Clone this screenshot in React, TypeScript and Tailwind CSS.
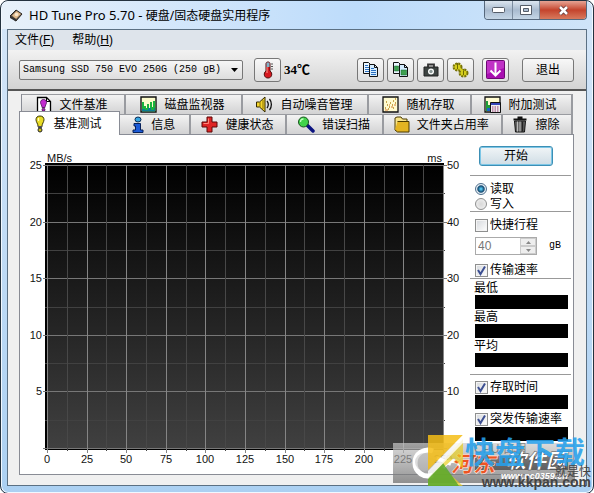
import React, {useState} from 'react'

const SANS = 'font-["Liberation_Sans","Noto_Sans_CJK_SC",sans-serif]'

const TOP_TABS = [
    {id: 'file', title: '文件基准', icon: <FileIcon />},
    {id: 'disk', title: '磁盘监视器', icon: <MonitorIcon />},
    {id: 'aam', title: '自动噪音管理', icon: <SpeakerIcon />},
    {id: 'random', title: '随机存取', icon: <RandomIcon />},
    {id: 'extra', title: '附加测试', icon: <ExtraIcon />}
]

const BOTTOM_TABS = [
    {id: 'bench', title: '基准测试', icon: <BulbIcon />},
    {id: 'info', title: '信息', icon: <InfoIcon />},
    {id: 'health', title: '健康状态', icon: <CrossIcon />},
    {id: 'scan', title: '错误扫描', icon: <ScanIcon />},
    {id: 'folder', title: '文件夹占用率', icon: <FolderIcon />},
    {id: 'erase', title: '擦除', icon: <TrashIcon />}
]

function FileIcon() {
    return (
        <svg width="16" height="18" viewBox="0 0 16 18">
            <path d="M1.500 1.500h9l4 4v11h-13z" fill="#fff" stroke="#000" strokeWidth="1.300" />
            <path d="M10.500 1.500v4h4" fill="none" stroke="#000" />
            <path d="M7.500 3.500c2 0 3 1.300 3 3 0 1.500-1.500 3-1.500 5H6c0-2-1.500-3.500-1.500-5 0-1.700 1-3 3-3z" fill="#c32bd0" stroke="#4a0a55" strokeWidth=".8" />
            <circle cx="7.500" cy="13.700" r="1.500" fill="#a81cb5" stroke="#300038" strokeWidth=".7" />
        </svg>
    )
}

function MonitorIcon() {
    return (
        <svg width="17" height="17" viewBox="0 0 17 17">
            <path d="M1 1h15v15H1z" fill="#fdfccc" stroke="#111" strokeWidth="1.400" />
            <path d="M2 15.300V6h2v4h2v2h1V8h2v4h1V6h2v5h1V5h2.300v10.300z" fill="#19b33c" />
            <path d="M2 15.300V13h3v1h3v-2h3v2h3v-2h1v3.300z" fill="#0b7c94" />
        </svg>
    )
}

function SpeakerIcon() {
    return (
        <svg width="18" height="17" viewBox="0 0 18 17">
            <path d="M1.500 6h3L10 1v15l-5.500-5h-3z" fill="#f4d42c" stroke="#332900" />
            <path d="M5 6v5M8 4v9" stroke="#8a7206" />
            <path d="M12 5c1.500 2 1.500 5 0 7M14.500 3c2.500 3 2.500 8 0 11" fill="none" stroke="#111" strokeWidth="1.300" />
        </svg>
    )
}

function RandomIcon() {
    return (
        <svg width="17" height="17" viewBox="0 0 17 17">
            <path d="M1 1h15v15H1z" fill="#fffbd0" stroke="#111" strokeWidth="1.300" />
            <path d="M3 12h1M5 9h1M7 11h1M8 7h1M10 9h1M11 5h1M13 7h1M13 3h1M4 6h1M6 13h1M11 12h1" stroke="#b78a20" strokeWidth="1.300" />
            <path d="M3 14h3M9 11h2M12 9h2M7 9h1" stroke="#d77b35" />
        </svg>
    )
}

function ExtraIcon() {
    return (
        <svg width="17" height="17" viewBox="0 0 17 17">
            <path d="M1 1h15v15H1z" fill="#fffbd0" stroke="#111" strokeWidth="1.300" />
            <path d="M2 15V5h2v4h2v6z" fill="#1f9e3a" />
            <path d="M3 15v-3h3v3z" fill="#1b63c8" />
            <path d="M6.500 6.500h10v10h-10z" fill="#eee" stroke="#111" />
            <path d="M7 7h9v2H7z" fill="#3545b8" />
            <path d="M8 11h7M8 13h7M8 15h7" stroke="#96346e" strokeDasharray="1.500 1" />
        </svg>
    )
}

function BulbIcon() {
    return (
        <svg width="12" height="18" viewBox="0 0 12 18">
            <path d="M6 1c2.700 0 4 1.500 4 3.800C10 7 8 8.500 7.800 12H4.200C4 8.500 2 7 2 4.800 2 2.500 3.300 1 6 1z" fill="#e9dc26" stroke="#3a3500" />
            <path d="M4.500 3v3" stroke="#fffcc0" strokeWidth="1.300" />
            <path d="M4 11h4v2H4z" fill="#555" />
            <circle cx="6" cy="15" r="2" fill="#cfc01c" stroke="#222" />
        </svg>
    )
}

function InfoIcon() {
    return (
        <svg width="12" height="18" viewBox="0 0 12 18">
            <ellipse cx="6" cy="3.500" rx="3" ry="2.500" fill="#37a7e2" stroke="#0a2c55" />
            <path d="M2 7.500h6.500V14H11v2.500H1V14h2.500v-4H2z" fill="#1c5bd8" stroke="#07215a" />
        </svg>
    )
}

function CrossIcon() {
    return (
        <svg width="17" height="17" viewBox="0 0 17 17">
            <path d="M6 1h5v5h5v5h-5v5H6v-5H1V6h5z" fill="#df2424" stroke="#5a0808" />
            <path d="M7.500 2.500v5h-5" fill="none" stroke="#ff8878" />
        </svg>
    )
}

function ScanIcon() {
    return (
        <svg width="18" height="17" viewBox="0 0 18 17">
            <path d="M10 9l6 6" stroke="#0b1380" strokeWidth="3.500" strokeLinecap="round" />
            <circle cx="6.500" cy="6" r="5" fill="#41d34b" stroke="#18541d" />
            <path d="M3.500 6c0-2 1-3 3-3" fill="none" stroke="#c2ffc0" strokeWidth="1.300" />
        </svg>
    )
}

function FolderIcon() {
    return (
        <svg width="16" height="17" viewBox="0 0 16 17">
            <path d="M1 14V2l2-1h4l1.500 2H13v11z" fill="#f7e48a" stroke="#4b3a00" />
            <path d="M3.500 5.500h11.500v10.500H3.500L1 14" fill="#e3b422" stroke="#4b3a00" />
        </svg>
    )
}

function TrashIcon() {
    return (
        <svg width="16" height="17" viewBox="0 0 16 17">
            <path d="M5.500 1.500h5M1.500 3.500h13" stroke="#111" strokeWidth="1.800" />
            <path d="M2.500 5h11l-1 11h-9z" fill="#666" stroke="#111" />
            <path d="M5.500 5.500v10M8 5.500v10" stroke="#bbb" />
            <path d="M10.500 5.500v10" stroke="#222" strokeWidth="1.500" />
        </svg>
    )
}

function DriveIcon() {
    return (
        <svg width="14" height="13" viewBox="0 0 14 13">
            <path d="M1 7l6-6 6 4-6 7z" fill="#5d5348" stroke="#2a2622" />
            <path d="M3 6.500L7.500 2 12 5 7 10z" fill="#e0b98a" />
            <circle cx="7.500" cy="5.500" r="1.800" fill="#f8e6cc" />
            <path d="M1 7v2l6 3.500V10z" fill="#333" />
        </svg>
    )
}

function ThermometerIcon() {
    return (
        <svg width="12" height="18" viewBox="0 0 12 18">
            <path d="M4 2.500C4 .5 8 .5 8 2.500V10c3 2 2 7-2 7s-5-5-2-7z" fill="#d71920" stroke="#4c0c0c" />
            <path d="M4.500 1.500h3V6h-3z" fill="#7fb3c9" />
            <path d="M5 6v6" stroke="#ff9c90" />
            <path d="M9 3h2M9 5.500h2M9 8h2" stroke="#555" />
        </svg>
    )
}

function CopyIcon({green}: { green?: boolean }) {
    return (
        <svg width="17" height="17" viewBox="0 0 17 17">
            <path d="M1.500 1.500h5l2 2v9h-7z" fill="#eaf6ff" stroke="#111" />
            <path d="M7.500 3.500h5l3 3v9h-8z" fill="#d5edff" stroke="#111" />
            <path d="M12.500 3.500v3h3" fill="none" stroke="#111" />
            { green
                ? <path d="M2.500 5h4v5h-4zM9 9h5.500v5H9z" fill="#3ea04f" stroke="#176b28" strokeWidth=".5" />
                : <path d="M3 4.500h3M3 6.500h4M3 8.500h4M3 10.500h4M9 7.500h3M9 9.500h5M9 11.500h5M9 13.500h5" stroke="#2a6fc0" /> }
        </svg>
    )
}

function CameraIcon() {
    return (
        <svg width="16" height="14" viewBox="0 0 16 14">
            <path d="M5 4V1.500h6V4" fill="none" stroke="#333" strokeWidth="1.800" />
            <path d="M1 4h14v9H1z" fill="#3d4442" stroke="#222" />
            <circle cx="8" cy="8.500" r="3" fill="#fff" />
            <circle cx="8" cy="8.500" r="1.700" fill="#8c9a98" />
        </svg>
    )
}

function OptionsIcon() {
    return (
        <svg width="17" height="16" viewBox="0 0 17 16">
            <ellipse cx="5.500" cy="5" rx="4" ry="3.500" fill="#d6cf1c" stroke="#77720a" strokeWidth="2" strokeDasharray="2 1" />
            <ellipse cx="11.500" cy="11" rx="4" ry="3.500" fill="#d6cf1c" stroke="#77720a" strokeWidth="2" strokeDasharray="2 1" />
            <path d="M5.500 1v6M11.500 7v6" stroke="#6f6a00" />
            <path d="M7 6l4 3" stroke="#d6cf1c" strokeWidth="2" />
        </svg>
    )
}

function SaveIcon() {
    return (
        <svg width="19" height="19" viewBox="0 0 19 19">
            <rect x=".5" y=".5" width="18" height="18" rx="1" fill="#a80fb0" stroke="#6c0873" />
            <path d="M1 1h17v7L1 14z" fill="#d04ad6" opacity=".6" />
            <path d="M9.500 2.500v13M4.500 10.500l5 5 5-5" fill="none" stroke="#fff" strokeWidth="2" />
        </svg>
    )
}

function ToolButton({label, children}: { label: string, children: React.ReactNode }) {
    return (
        <button
            aria-label={label}
            className="flex h-6 w-[27px] shrink-0 items-center justify-center rounded-[3px] border border-[#777] bg-linear-to-b from-[#f8f8f8] to-[#dedede]"
        >
            {children}
        </button>
    )
}

function Tab({title, icon, active, onClick}: { title: string, icon: React.ReactNode, active: boolean, onClick: () => void }) {
    return (
        <button
            role="tab"
            aria-selected={active}
            onClick={onClick}
            className={active
                ? 'relative z-10 -mt-[3px] -mb-px flex items-center justify-center gap-2 border border-b-0 border-[#898c95] bg-white pt-px pr-1 whitespace-nowrap'
                : 'flex h-5 items-center justify-center gap-[7px] border-t border-r-2 border-[#999ba0] bg-linear-to-b from-[#f3f3f3] to-[#d2d2d3] pr-[2px] whitespace-nowrap'}
        >
            {icon}
            <span>{title}</span>
        </button>
    )
}

function Chart() {
    const columns = Array.from({length: 21}, (_, i) => i)
    const rows = Array.from({length: 11}, (_, i) => i)
    const x = (i: number) => 27 + Math.round(i * 19.8)
    const y = (i: number) => 30 + Math.round(i * 28.3)

    return (
        <svg viewBox="0 0 450 339" className="block w-full" fontSize="11" fill="#111" shapeRendering="crispEdges">
            <defs>
                <linearGradient id="plot" x1="0" y1="0" x2="0" y2="1">
                    <stop offset="0" stopColor="#000" />
                    <stop offset="1" stopColor="#404040" />
                </linearGradient>
            </defs>
            <rect x="25" y="28" width="399" height="287" fill="#000" />
            <rect x="27" y="30" width="396" height="283" fill="url(#plot)" />
            { rows.map(i => (
                <rect key={i} x={i % 2 ? 25 : 23} y={y(i)} width={i % 2 ? 400 : 404} height="1" fill={i % 2 ? '#414141' : '#777'} />
            )) }
            { columns.map(i => (
                <rect key={i} x={x(i)} y="30" width="1" height={i % 2 ? 286 : 288} fill={i % 2 ? '#484848' : '#858585'} />
            )) }
            <text x="27" y="27">MB/s</text>
            <text x="422" y="27" textAnchor="end">ms</text>
            { [25, 20, 15, 10, 5].map((value, i) => (
                <text key={value} x="22" y={y(i * 2) + 4} textAnchor="end">{value}</text>
            )) }
            { [50, 40, 30, 20, 10].map((value, i) => (
                <text key={value} x="427" y={y(i * 2) + 4}>{value}</text>
            )) }
            { columns.filter(i => i % 2 === 0).map(i => (
                <text key={i} x={x(i)} y="328" textAnchor="middle">{i * 12.5}</text>
            )) }
        </svg>
    )
}

function CheckRow({label, checked}: { label: string, checked?: boolean }) {
    return (
        <label className="ml-[5px] flex h-4 items-center gap-[2px] whitespace-nowrap">
            <span className="grid shrink-0">
                <input
                    type="checkbox"
                    defaultChecked={checked}
                    className="peer col-start-1 row-start-1 size-[13px] appearance-none border border-[#8e8f8f] bg-linear-to-br from-[#d5d8dc] to-white shadow-[inset_0_0_0_1px_#f4f4f4]"
                />
                <svg viewBox="0 0 13 13" className="pointer-events-none invisible col-start-1 row-start-1 size-[13px] peer-checked:visible">
                    <path d="M3 6l2.500 4L10 2.500" fill="none" stroke="#3c4f92" strokeWidth="2" />
                </svg>
            </span>
            {label}
        </label>
    )
}

function RadioRow({label, checked}: { label: string, checked?: boolean }) {
    return (
        <label className="ml-[5px] flex h-[15px] items-center gap-[3px]">
            <input
                type="radio"
                name="mode"
                defaultChecked={checked}
                className="size-3 appearance-none rounded-full border border-[#8e8f8f] bg-radial from-[#d8d8d8] to-[#f4f4f4] checked:border-[#4f6f8c] checked:from-[#52c0ea] checked:from-10% checked:via-[#12486e] checked:via-45% checked:to-[#e4eef5] checked:to-60%"
            />
            {label}
        </label>
    )
}

function Result({label}: { label?: string }) {
    return (
        <div>
            { label && <p className="ml-1 h-[15px] leading-4">{label}</p> }
            <div className="mr-[3px] ml-[5px] h-[14px] bg-black" />
        </div>
    )
}

function SidePanel() {
    return (
        <div className="flex w-[101px] shrink-0 flex-col pt-[11px]">
            <button className="ml-[9px] h-5 w-[74px] rounded-[3px] border border-[#3c8fb5] bg-linear-to-b from-[#f1f5f7] to-[#cfdde5] leading-4 shadow-[inset_0_0_0_1px_#7cc6e6]">开始</button>
            <div className="mt-[9px] border-y border-[#999] pt-[5px]">
                <RadioRow label="读取" checked />
                <RadioRow label="写入" />
            </div>
            <div className="border-b border-[#999] pt-[5px]">
                <CheckRow label="快捷行程" />
                <div className="mt-1 mb-[7px] ml-[5px] flex items-center font-['Liberation_Mono',monospace] text-[10px]">
                    <div className="flex h-[18px] w-[62px] border border-[#aaa]">
                        <input aria-label="行程大小" defaultValue="40" disabled className="w-10 min-w-0 grow pl-[2px] font-['Liberation_Sans',sans-serif] text-xs text-[#777]" />
                        <div className="flex w-4 flex-col text-[#888]">
                            <button aria-label="增加" className="flex h-2 items-center justify-center border border-[#ccc] bg-[#eee]">
                                <svg width="5" height="3"><path d="M0 3L2.500 0 5 3z" fill="currentColor" /></svg>
                            </button>
                            <button aria-label="减少" className="flex h-2 items-center justify-center border border-[#ccc] bg-[#eee]">
                                <svg width="5" height="3"><path d="M0 0l2.500 3L5 0z" fill="currentColor" /></svg>
                            </button>
                        </div>
                    </div>
                    <span className="ml-3">gB</span>
                </div>
                <CheckRow label="传输速率" checked />
            </div>
            <div className="border-b border-[#999] pt-px pb-[7px]">
                <Result label="最低" />
                <Result label="最高" />
                <Result label="平均" />
            </div>
            <div className="pt-1">
                <CheckRow label="存取时间" checked />
                <Result />
                <div className="h-[2px]" />
                <CheckRow label="突发传输速率" checked />
                <Result />
                <Result label="CPU 占用" />
            </div>
        </div>
    )
}

function Watermark() {
    return (
        <div className="pointer-events-none absolute right-0 bottom-0 h-[60px] w-[200px]">
            <svg viewBox="0 0 200 60" className="size-full">
                <defs>
                    <linearGradient id="plate" x1="0" y1="0" x2="0" y2="1">
                        <stop offset="0" stopColor="#ccc" />
                        <stop offset="1" stopColor="#666" />
                    </linearGradient>
                </defs>
                <rect x="0" y="10" width="182" height="40" fill="url(#plate)" opacity=".7" />
                <path d="M40 18a13 13 0 1 0 0 24" fill="none" stroke="#fff" strokeWidth="5" />
                <circle cx="31" cy="29" r="9" fill="#bbb" opacity=".5" />
                <path d="M44 25l14 6M50 35c4-10 16-8 18-2" fill="none" stroke="#fff" strokeWidth="4" />
                <g fontFamily="Noto Sans CJK SC, sans-serif" fontWeight="900" fontStyle="italic">
                    <text x="58" y="39" fontSize="22" fill="#ee5423" stroke="#fff" strokeWidth=".5">河东</text>
                    <text x="113" y="35" fontSize="20" fill="#fff" stroke="#444" strokeWidth=".5">软件园</text>
                </g>
                <text x="108" y="46" fontSize="9" fontWeight="bold" fontStyle="italic" fill="#fff">www.pc0359.cn</text>
                <path d="M35 2h35L35 37z" fill="#f5bd15" opacity=".85" />
                <path d="M70 6v30L61 25 50 35 70 53H35v-8z" fill="#e8cf22" opacity=".7" />
                <path d="M50 30L35 45v8h31z" fill="#58a82c" opacity=".85" />
                <path d="M70 2L35 38v8L70 10z" fill="#fff" opacity=".8" />
                <text x="72" y="30" fontSize="30" fontWeight="700" fontFamily="Noto Sans CJK SC, sans-serif" fill="#26a0eb" opacity=".88">快盘下载</text>
                <text x="198" y="43" textAnchor="end" fontSize="12" fontFamily="Noto Sans CJK SC, sans-serif" fill="#444">就是快</text>
                <text x="198" y="54" textAnchor="end" fontSize="14" fontFamily="Liberation Sans, sans-serif" fontWeight="bold" fill="#444">www.kkpan.com</text>
            </svg>
        </div>
    )
}

export default function App() {
    const [tab, setTab] = useState('bench')

    return (
        <div className={`relative flex min-h-screen flex-col rounded-lg border border-[#24323f] bg-linear-to-b from-[#d5e6f8] via-[#c9e0f7] via-30% to-[#abd0f2] px-[6px] pb-[7px] text-xs leading-4 text-black shadow-[inset_0_0_0_1px_#f1f8ff] ${SANS}`}>
            <header className="-mx-[5px] flex h-7 justify-between rounded-t-lg bg-linear-to-r from-[#e8f1fa] via-[#bddcfb] via-60% to-[#cfe4f8] pr-[5px] pl-[7px]">
                <h1 className="flex items-center gap-[6px] font-['Noto_Sans','Noto_Sans_CJK_SC',sans-serif] text-[13px]">
                    <DriveIcon />
                    <span className="whitespace-nowrap">HD Tune Pro 5.70 - <span className="text-xs">硬盘/固态硬盘实用程序</span></span>
                </h1>
                <div className="flex h-[19px] w-[103px] overflow-hidden rounded-b-[4px] border border-t-0 border-[#56687c]">
                    <button aria-label="最小化" className="flex w-7 items-center justify-center border-r border-[#7b8c9f] bg-linear-to-b from-[#dce6f0] via-[#a9bbcf] to-[#c5d6e6]">
                        <svg width="13" height="6"><rect x=".5" y=".5" width="12" height="5" rx="1" fill="#fff" stroke="#555d68" /></svg>
                    </button>
                    <button aria-label="最大化" className="flex w-[27px] items-center justify-center border-r border-[#7b8c9f] bg-linear-to-b from-[#dce6f0] via-[#a9bbcf] to-[#c5d6e6]">
                        <svg width="12" height="10">
                            <path d="M.5.5h11v9H.500zM3.500 3.500h5v3h-5z" fill="#fff" fillRule="evenodd" stroke="#555d68" />
                        </svg>
                    </button>
                    <button aria-label="关闭" className="flex grow items-center justify-center bg-linear-to-b from-[#e5a394] via-[#c4432c] to-[#d8795d]">
                        <svg width="13" height="11" viewBox="0 0 13 11">
                            <path d="M3 2l7 7M10 2L3 9" stroke="#5b3638" strokeWidth="4" />
                            <path d="M3 2l7 7M10 2L3 9" stroke="#fff" strokeWidth="2.500" />
                        </svg>
                    </button>
                </div>
            </header>

            <main className="flex grow flex-col border border-[#5b7083] bg-[#f0f0f0]">
                <nav className="flex h-5 items-center gap-[18px] bg-[#dee4eb] px-[7px]">
                    <button>文件(<u>F</u>)</button>
                    <button>帮助(<u>H</u>)</button>
                </nav>

                <div className="flex h-[41px] items-center border-b-2 border-[#555] bg-linear-to-b from-[#f2f2f2] to-[#d3d3d3] pr-3 pl-[11px]">
                    <div className="grid h-5 w-[224px] items-center rounded-[2px] border border-[#777] bg-linear-to-b from-[#f6f6f6] to-[#dedede]">
                        <select aria-label="硬盘" className="col-start-1 row-start-1 h-full w-full appearance-none pl-[3px] font-['Liberation_Mono',monospace] text-[10px]">
                            <option>Samsung SSD 750 EVO 250G (250 gB)</option>
                        </select>
                        <svg width="7" height="4" className="pointer-events-none col-start-1 row-start-1 mr-1 justify-self-end">
                            <path d="M0 0h7L3.500 4z" />
                        </svg>
                    </div>
                    <div className="ml-[11px] flex items-center gap-[3px]">
                        <ToolButton label="温度"><ThermometerIcon /></ToolButton>
                        <span className="font-['Liberation_Serif','Noto_Sans_CJK_SC',serif] text-[13px] font-bold">34℃</span>
                    </div>
                    <div className="ml-auto flex gap-[3px]">
                        <ToolButton label="复制文本"><CopyIcon /></ToolButton>
                        <ToolButton label="复制图像"><CopyIcon green /></ToolButton>
                        <ToolButton label="截图"><CameraIcon /></ToolButton>
                        <ToolButton label="选项"><OptionsIcon /></ToolButton>
                    </div>
                    <div className="ml-2 flex gap-[13px]">
                        <ToolButton label="保存"><SaveIcon /></ToolButton>
                        <button className="h-6 w-[52px] rounded-[3px] border border-[#777] bg-linear-to-b from-[#f8f8f8] to-[#dedede]">退出</button>
                    </div>
                </div>

                <div className="flex grow flex-col pt-[3px] pr-3 pb-[10px] pl-[11px]">
                    <div role="tablist">
                        <div className="mr-px ml-[2px] grid grid-cols-[104fr_117fr_126fr_103fr_101fr] border-l border-[#898c95]">
                            { TOP_TABS.map(item => (
                                <Tab key={item.id} title={item.title} icon={item.icon} active={tab === item.id} onClick={() => setTab(item.id)} />
                            )) }
                        </div>
                        <div className="mr-px grid grid-cols-[101fr_71fr_96fr_96fr_119fr_70fr]">
                            { BOTTOM_TABS.map(item => (
                                <Tab key={item.id} title={item.title} icon={item.icon} active={tab === item.id} onClick={() => setTab(item.id)} />
                            )) }
                        </div>
                    </div>
                    <section className="flex grow items-start border border-[#898c95] bg-white pr-[2px]">
                        <div className="min-w-0 grow">
                            <Chart />
                        </div>
                        <SidePanel />
                    </section>
                </div>
            </main>
            <Watermark />
        </div>
    )
}
